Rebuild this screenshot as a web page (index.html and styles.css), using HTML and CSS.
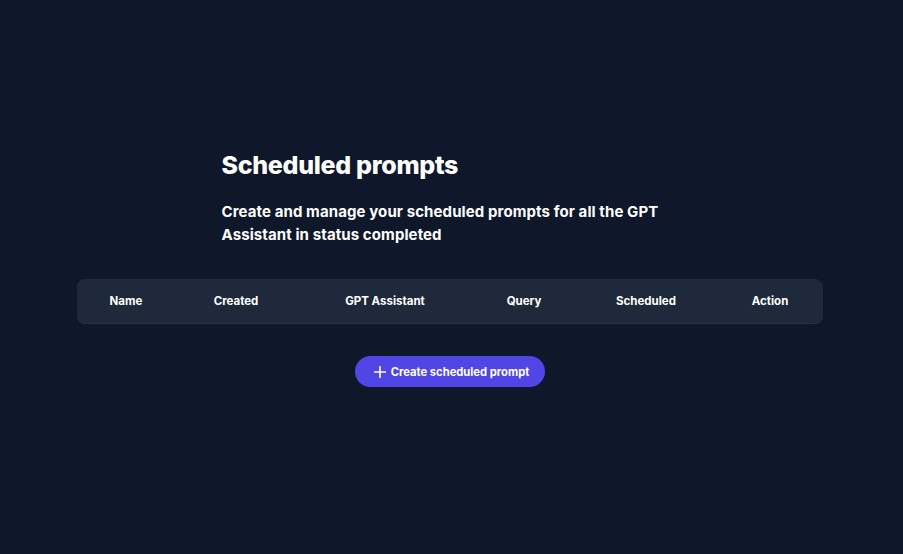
FILE: index.html
```html
<!DOCTYPE html>
<html lang="en">
<head>
<meta charset="utf-8">
<title>Scheduled prompts</title>
<link rel="stylesheet" href="styles.css">
</head>
<body>
<main class="page">
  <section class="intro">
    <h1 class="title">Scheduled prompts</h1>
    <p class="subtitle">Create and manage your scheduled prompts for all the GPT Assistant in status completed</p>
  </section>
  <div class="table">
    <div class="thead">
      <div class="th">Name</div>
      <div class="th">Created</div>
      <div class="th">GPT Assistant</div>
      <div class="th">Query</div>
      <div class="th">Scheduled</div>
      <div class="th">Action</div>
    </div>
  </div>
  <div class="actions">
    <button class="btn" type="button">
      <svg class="plus" viewBox="0 0 12 12" width="12" height="12" aria-hidden="true"><path d="M6 0.5V11.5M0.5 6H11.5" stroke="#fff" stroke-width="1.6" stroke-linecap="round"/></svg>
      <span>Create scheduled prompt</span>
    </button>
  </div>
</main>
</body>
</html>
```
FILE: styles.css
```css
html, body {
  margin: 0;
  padding: 0;
  background: #0f172a;
  color: #ffffff;
  font-family: Inter, "Noto Sans", sans-serif;
}
.page {
  min-height: 554px;
  box-sizing: border-box;
  padding-top: 149px;
  display: flex;
  flex-direction: column;
  align-items: center;
}
.intro {
  width: 460px;
}
.title {
  margin: 0;
  font-size: 25px;
  line-height: 32px;
  font-weight: 800;
  letter-spacing: -0.3px;
}
.subtitle {
  margin: 19px 0 0;
  font-size: 15px;
  line-height: 23px;
  font-weight: 700;
  letter-spacing: 0.1px;
}
.table {
  margin-top: 33px;
  margin-right: 3px;
  width: 746px;
  background: #1e293b;
  border-radius: 8px;
  border-bottom: 1px solid #263246;
}
.thead {
  display: grid;
  grid-template-columns: 98px 122px 176px 102px 142px 106px;
  height: 44px;
  align-items: center;
}
.th {
  text-align: center;
  font-size: 11.5px;
  font-weight: 700;
}
.actions {
  margin-top: 32px;
  margin-right: 3px;
}
.btn {
  display: flex;
  align-items: center;
  gap: 5px;
  height: 31px;
  padding: 0 16px 0 19px;
  border: none;
  border-radius: 16px;
  background: #4f46e5;
  color: #fff;
  font-family: inherit;
  font-size: 11.2px;
  font-weight: 700;
}
.plus {
  display: block;
}
```
